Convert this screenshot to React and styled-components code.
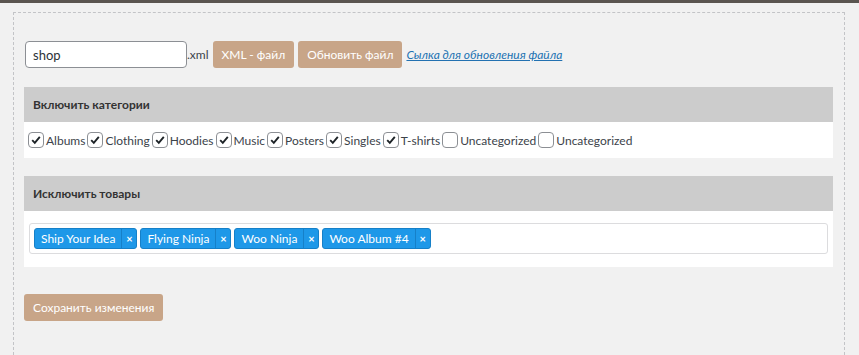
import React from 'react';
import styled, { createGlobalStyle } from 'styled-components';

const GlobalStyle = createGlobalStyle`
  html, body {
    margin: 0;
    padding: 0;
    background: #f1f1f1;
    font-family: Lato, "Open Sans", sans-serif;
    font-size: 12px;
    color: #3c434a;
  }
`;

const TopBar = styled.div`
  height: 3px;
  background: #5a5550;
`;

const Page = styled.div`
  padding: 9px 14px 0 13px;
`;

const Frame = styled.div`
  border: 1px dashed #c3c4c7;
  border-bottom: none;
  padding: 28px 10px 34px 10px;
  min-height: 320px;
  box-sizing: border-box;
`;

const FileRow = styled.div`
  display: flex;
  align-items: center;
  gap: 4px;
  margin-left: 1px;
`;

const NameInput = styled.input`
  width: 162px;
  height: 27px;
  box-sizing: border-box;
  border: 1px solid #8c8f94;
  border-radius: 4px;
  padding: 0 7px;
  font-family: inherit;
  font-size: 13px;
  color: #2c3338;
  background: #fff;
`;

const Suffix = styled.span`
  margin-left: -4px;
  color: #3c434a;
  font-size: 12px;
`;

const Button = styled.button`
  height: 27px;
  padding: 0 9px;
  border: none;
  border-radius: 3px;
  background: #c8a588;
  color: #fff;
  font-family: inherit;
  font-size: 12px;
  cursor: pointer;
`;

const Link = styled.a`
  color: #2271b1;
  font-style: italic;
  text-decoration: underline;
  font-size: 12px;
`;

const Section = styled.section`
  margin-top: ${p => p.$top}px;
  margin-right: 1px;
`;

const SectionHead = styled.div`
  background: #cccccc;
  height: 35px;
  display: flex;
  align-items: center;
  padding-left: 9px;
  font-weight: 700;
  color: #333;
  font-size: 12px;
`;

const SectionBody = styled.div`
  background: #fff;
  padding: ${p => p.$pad};
`;

const CheckList = styled.div`
  display: flex;
  align-items: center;
  height: 36px;
  padding-left: 4px;
  font-size: 12px;
`;

const CheckItem = styled.label`
  display: flex;
  align-items: center;
  gap: 2px;
  margin-right: 2px;
  color: #3c434a;
`;

const Box = styled.span`
  width: 14px;
  height: 14px;
  border: 1px solid #8c8f94;
  border-radius: 4px;
  background: #fff;
  display: inline-flex;
  align-items: center;
  justify-content: center;
`;

const TagField = styled.div`
  border: 1px solid #dcdcde;
  border-radius: 3px;
  height: 31px;
  box-sizing: border-box;
  display: flex;
  align-items: center;
  gap: 3px;
  padding-left: 4px;
`;

const Tag = styled.span`
  display: inline-flex;
  align-items: stretch;
  height: 21px;
  background: #1e98e8;
  border: 1px solid #1680c8;
  border-radius: 3px;
  color: #fff;
  box-sizing: border-box;
  font-size: 12px;
`;

const TagText = styled.span`
  display: flex;
  align-items: center;
  padding: 0 6px;
`;

const TagClose = styled.span`
  display: flex;
  align-items: center;
  justify-content: center;
  width: 14px;
  border-left: 1px solid #1680c8;
  font-size: 11px;
  font-weight: 700;
`;

const SaveRow = styled.div`
  margin-top: 27px;
`;

const Check = ({ checked }) => (
  <Box>
    {checked && (
      <svg width="12" height="12" viewBox="0 0 12 12">
        <path d="M2.2 6.2 L4.8 8.8 L9.8 2.8" fill="none" stroke="#1d2327" strokeWidth="1.9" />
      </svg>
    )}
  </Box>
);

const categories = [
  ['Albums', true],
  ['Clothing', true],
  ['Hoodies', true],
  ['Music', true],
  ['Posters', true],
  ['Singles', true],
  ['T-shirts', true],
  ['Uncategorized', false],
  ['Uncategorized', false],
];

const products = ['Ship Your Idea', 'Flying Ninja', 'Woo Ninja', 'Woo Album #4'];

export default function App() {
  return (
    <>
      <GlobalStyle />
      <TopBar />
      <Page>
        <Frame>
          <FileRow>
            <NameInput defaultValue="shop" />
            <Suffix>.xml</Suffix>
            <Button>XML - файл</Button>
            <Button>Обновить файл</Button>
            <Link href="#">Сылка для обновления файла</Link>
          </FileRow>

          <Section $top={19}>
            <SectionHead>Включить категории</SectionHead>
            <SectionBody $pad="0">
              <CheckList>
                {categories.map(([name, on], i) => (
                  <CheckItem key={i}>
                    <Check checked={on} />
                    {name}
                  </CheckItem>
                ))}
              </CheckList>
            </SectionBody>
          </Section>

          <Section $top={18}>
            <SectionHead>Исключить товары</SectionHead>
            <SectionBody $pad="12px 5px 13px 5px">
              <TagField>
                {products.map(p => (
                  <Tag key={p}>
                    <TagText>{p}</TagText>
                    <TagClose>×</TagClose>
                  </Tag>
                ))}
              </TagField>
            </SectionBody>
          </Section>

          <SaveRow>
            <Button>Сохранить изменения</Button>
          </SaveRow>
        </Frame>
      </Page>
    </>
  );
}
